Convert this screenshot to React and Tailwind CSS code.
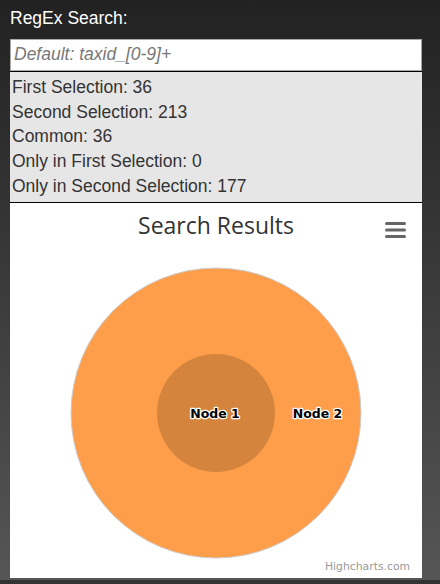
import React from 'react';

const stats = [
  ['First Selection', 36],
  ['Second Selection', 213],
  ['Common', 36],
  ['Only in First Selection', 0],
  ['Only in Second Selection', 177],
];

const Hamburger = () => (
  <svg width="24" height="20" viewBox="0 0 24 20" className="block">
    <g stroke="#666" strokeWidth="3" strokeLinecap="round">
      <path d="M2.5 3.5 L20.5 3.5" />
      <path d="M2.5 10 L20.5 10" />
      <path d="M2.5 16.5 L20.5 16.5" />
    </g>
  </svg>
);

const VennChart = () => (
  <div className="relative bg-white h-[375px] w-full">
    <div className="flex justify-center pt-[7px]">
      <h2 className="text-[23px] leading-[30px] text-[#333] font-['Open_Sans',sans-serif]">
        Search Results
      </h2>
    </div>
    {/* export menu button */}
    <button className="absolute top-[17px] right-[14px]">
      <Hamburger />
    </button>
    <svg width="412" height="375" className="absolute left-0 top-0" viewBox="0 0 412 375">
      <circle cx="206" cy="210" r="145" fill="#ff9e4a" stroke="#cccccc" strokeWidth="1" />
      <circle cx="206" cy="210" r="59" fill="#d4843d" />
      <g
        fontFamily="'DejaVu Sans', sans-serif"
        fontWeight="bold"
        fontSize="12.5"
        textAnchor="middle"
        fill="#000"
        stroke="#fff"
        strokeWidth="2.5"
        strokeLinejoin="round"
        style={{ paintOrder: 'stroke' }}
      >
        <text x="205" y="215">Node 1</text>
        <text x="307.5" y="215">Node 2</text>
      </g>
    </svg>
    <span className="absolute right-[12px] bottom-[3px] text-[10.8px] text-[#999] font-['DejaVu_Sans',sans-serif]">
      Highcharts.com
    </span>
  </div>
);

export default function App() {
  return (
    <div className="h-[584px] w-[440px] flex flex-col bg-gradient-to-b from-[#222] to-[#565656] font-['Liberation_Sans',Arial,sans-serif]">
      <div className="pl-[10px] pr-[18px] pt-[6px]">
        <label className="block text-white text-[17.5px] leading-[24.7px]">RegEx Search:</label>
        <input
          type="text"
          placeholder="Default: taxid_[0-9]+"
          className="mt-[8px] block w-full h-[32px] bg-white border border-[#a9a9a9] px-[3px] text-[17.5px] italic placeholder:text-[#777] outline-none"
        />
        <div className="border-t border-b border-black bg-[#e6e6e6] pl-[2px] pt-[3px] pb-[3px] text-[#333] text-[17.5px] leading-[24.8px]">
          {stats.map(([label, value]) => (
            <div key={label}>
              {label}: {value}
            </div>
          ))}
        </div>
        <VennChart />
      </div>
      <div className="mt-auto h-[4px] bg-[#333]" />
    </div>
  );
}
